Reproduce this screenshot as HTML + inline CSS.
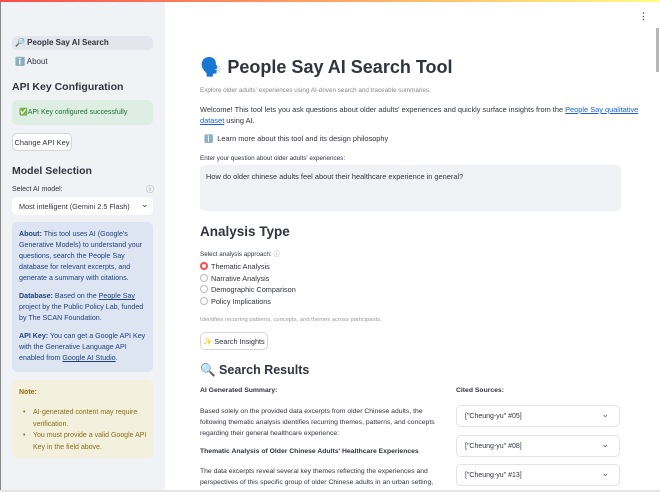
<!DOCTYPE html>
<html><head><meta charset="utf-8"><style>
*{margin:0;padding:0;box-sizing:border-box}
body{width:660px;height:492px;overflow:hidden;font-family:"Liberation Sans",sans-serif;color:#31333f;background:#fff;position:relative}
.a{position:absolute;white-space:nowrap}
#sb{position:absolute;left:0;top:0;width:165px;height:492px;background:#f0f2f6;border-left:1px solid #888}
#top{position:absolute;left:0;top:0;width:660px;height:2px;background:linear-gradient(90deg,#ff4b4b,#fffd80)}
.box{position:absolute;border-radius:5px}
.btn{position:absolute;border:1px solid #d6d6d9;border-radius:5px;background:#fff;font-size:7.5px;display:flex;align-items:center;justify-content:center;white-space:nowrap}
.rad{position:absolute;width:8px;height:8px;border-radius:50%;border:1px solid #bbb;background:#fff}
.exp{position:absolute;left:456px;width:164px;height:22px;border:1px solid #e3e3e6;border-radius:5px;font-size:7px;padding-left:8px;display:flex;align-items:center}
.exp:after{content:"⌄";position:absolute;right:10px;top:3px;font-size:9px;color:#555}
.sm{font-size:7px}
</style></head><body>
<div id="sb">
 <div class="box" style="left:11px;top:36px;width:141px;height:14px;background:#e3e6ed"></div>
 <div class="a" style="left:14px;top:38px;font-size:8px;font-weight:bold">🔎 People Say AI Search</div>
 <div class="a" style="left:14px;top:57px;font-size:8px">ℹ️ About</div>
 <div class="a" style="left:11px;top:81px;font-size:10.5px;font-weight:bold">API Key Configuration</div>
 <div class="box" style="left:11px;top:100px;width:141px;height:25px;background:#dfeee3"></div>
 <div class="a" style="left:18px;top:108px;font-size:7px;color:#177233">✅API Key configured successfully</div>
 <div class="btn" style="left:11px;top:133px;width:60px;height:18px">Change API Key</div>
 <div class="a" style="left:11px;top:165px;font-size:10.5px;font-weight:bold">Model Selection</div>
 <div class="a sm" style="left:11px;top:186px">Select AI model:</div>
 <div class="a" style="left:145px;top:184px;font-size:8px;color:#888">ⓘ</div>
 <div class="box" style="left:11px;top:197px;width:141px;height:18px;background:#fff"></div>
 <div class="a" style="left:18px;top:202px;font-size:7.3px">Most intelligent (Gemini 2.5 Flash)</div>
 <div class="a" style="left:140px;top:199px;font-size:9px">⌄</div>
 <div class="box" style="left:11px;top:222px;width:141px;height:150px;background:#dde5f3"></div>
 <div class="a" style="left:18px;top:229px;font-size:7.1px;line-height:11px;color:#1e3f7a;white-space:normal;width:130px"><b>About:</b> This tool uses AI (Google's Generative Models) to understand your questions, search the People Say database for relevant excerpts, and generate a summary with citations.<div style="height:7px"></div><b>Database:</b> Based on the <u>People Say</u> project by the Public Policy Lab, funded by The SCAN Foundation.<div style="height:7px"></div><b>API Key:</b> You can get a Google API Key with the Generative Language API enabled from <u>Google AI Studio</u>.</div>
 <div class="box" style="left:11px;top:380px;width:141px;height:78px;background:#f3f0de"></div>
 <div class="a" style="left:18px;top:389px;font-size:7px;font-weight:bold;color:#8a6d16">Note:</div>
 <div class="a" style="left:22px;top:407px;font-size:7px;line-height:11.5px;color:#8a6d16">•</div>
 <div class="a" style="left:22px;top:430px;font-size:7px;line-height:11.5px;color:#8a6d16">•</div>
 <div class="a" style="left:32px;top:407px;font-size:7px;line-height:11.5px;color:#8a6d16">AI-generated content may require<br>verification.</div>
 <div class="a" style="left:32px;top:430px;font-size:7px;line-height:11.5px;color:#8a6d16">You must provide a valid Google API<br>Key in the field above.</div>
</div>
<div id="top"></div>
<div class="a" style="left:639px;top:11px;font-size:9px;font-weight:bold;color:#555">⋮</div>
<div style="position:absolute;left:656px;top:28px;width:3px;height:44px;background:#b8b8b8"></div>
<div class="a" style="left:200px;top:57px;font-size:18px;font-weight:bold">🗣️ People Say AI Search Tool</div>
<div class="a" style="left:200px;top:87px;font-size:6.3px;color:#888">Explore older adults' experiences using AI-driven search and traceable summaries.</div>
<div class="a" style="left:200px;top:104px;font-size:7.4px;line-height:11px">Welcome! This tool lets you ask questions about older adults' experiences and quickly surface insights from the <u style="color:#1a62d6">People Say qualitative</u><br><u style="color:#1a62d6">dataset</u> using AI.</div>
<div class="a" style="left:204px;top:134px;font-size:7.4px">ℹ️&nbsp; Learn more about this tool and its design philosophy</div>
<div class="a" style="left:200px;top:155px;font-size:6.3px">Enter your question about older adults' experiences:</div>
<div class="box" style="left:200px;top:165px;width:421px;height:46px;background:#f0f2f6"></div>
<div class="a" style="left:206px;top:172px;font-size:7.4px">How do older chinese adults feel about their healthcare experience in general?</div>
<div class="a" style="left:200px;top:224px;font-size:13.5px;font-weight:bold">Analysis Type</div>
<div class="a" style="left:200px;top:249px;font-size:6.3px">Select analysis approach: <span style="color:#888">ⓘ</span></div>
<div class="rad" style="left:200px;top:262px;border:2.5px solid #ff4b4b"></div>
<div class="rad" style="left:200px;top:274px"></div>
<div class="rad" style="left:200px;top:285px"></div>
<div class="rad" style="left:200px;top:297px"></div>
<div class="a" style="left:211px;top:261px;font-size:7.3px;line-height:11.6px">Thematic Analysis<br>Narrative Analysis<br>Demographic Comparison<br>Policy Implications</div>
<div class="a" style="left:200px;top:317px;font-size:5.8px;color:#999">Identifies recurring patterns, concepts, and themes across participants.</div>
<div class="btn" style="left:200px;top:332px;width:68px;height:18px;font-size:7.3px">✨ Search Insights</div>
<div class="a" style="left:200px;top:363px;font-size:12.5px;font-weight:bold">🔍 Search Results</div>
<div class="a" style="left:200px;top:387px;font-size:6.8px;font-weight:bold">AI Generated Summary:</div>
<div class="a" style="left:456px;top:387px;font-size:6.8px;font-weight:bold">Cited Sources:</div>
<div class="a" style="left:200px;top:406px;font-size:6.8px;line-height:11px">Based solely on the provided data excerpts from older Chinese adults, the<br>following thematic analysis identifies recurring themes, patterns, and concepts<br>regarding their general healthcare experience:</div>
<div class="a" style="left:200px;top:448px;font-size:6.8px;font-weight:bold">Thematic Analysis of Older Chinese Adults' Healthcare Experiences</div>
<div class="a" style="left:200px;top:466px;font-size:6.8px;line-height:11px">The data excerpts reveal several key themes reflecting the experiences and<br>perspectives of this specific group of older Chinese adults in an urban setting,</div>
<div class="exp" style="top:405px">["Cheung-yu" #05]</div>
<div class="exp" style="top:435px">["Cheung-yu" #08]</div>
<div class="exp" style="top:464px">["Cheung-yu" #13]</div>
<div style="position:absolute;left:0;top:490px;width:660px;height:2px;background:#e4e4e4"></div>
</body></html>
